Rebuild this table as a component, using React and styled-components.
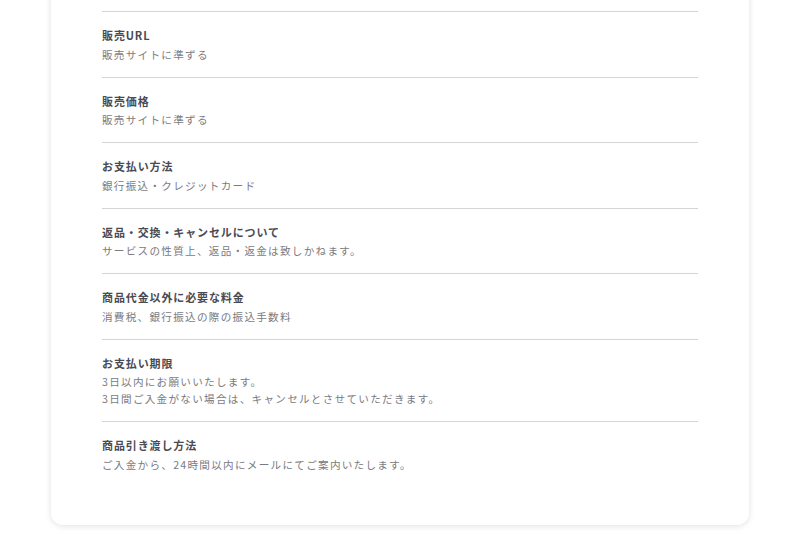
import React from "react";
import styled, { createGlobalStyle } from "styled-components";

const Global = createGlobalStyle`
  html, body { margin: 0; padding: 0; background: #ffffff; }
  body { font-family: "Noto Sans CJK JP", "Noto Sans", sans-serif; }
`;

const Page = styled.div`
  padding: 0 51px 35px;
  overflow: hidden;
`;

const Card = styled.section`
  margin-top: -40px;
  width: 698px;
  box-sizing: border-box;
  background: #fff;
  border-radius: 12px;
  box-shadow: 0 1px 6px rgba(0, 0, 0, 0.12);
  padding: 51px 51px 38px;
`;

const List = styled.dl`
  margin: 0;
`;

const Row = styled.div`
  border-top: 1px solid #d4d4d8;
  padding: 15px 0 13.6px;
  display: flex;
  flex-direction: column;
  gap: 3px;
`;

const Term = styled.dt`
  margin: 0;
  font-size: 11px;
  line-height: 16.5px;
  letter-spacing: 0.08em;
  font-weight: 700;
  color: #4a4a52;
`;

const Desc = styled.dd`
  margin: 0;
  font-size: 10.6px;
  line-height: 16.5px;
  letter-spacing: 0.12em;
  color: #7a7a7f;
`;

const items = [
  ["販売URL", ["販売サイトに準ずる"]],
  ["販売価格", ["販売サイトに準ずる"]],
  ["お支払い方法", ["銀行振込・クレジットカード"]],
  ["返品・交換・キャンセルについて", ["サービスの性質上、返品・返金は致しかねます。"]],
  ["商品代金以外に必要な料金", ["消費税、銀行振込の際の振込手数料"]],
  ["お支払い期限", ["3日以内にお願いいたします。", "3日間ご入金がない場合は、キャンセルとさせていただきます。"]],
  ["商品引き渡し方法", ["ご入金から、24時間以内にメールにてご案内いたします。"]],
];

export default function App() {
  return (
    <Page>
      <Global />
      <Card>
        <List>
          {items.map(([t, lines]) => (
            <Row key={t}>
              <Term>{t}</Term>
              <Desc>
                {lines.map((l, i) => (
                  <React.Fragment key={i}>
                    {i > 0 && <br />}
                    {l}
                  </React.Fragment>
                ))}
              </Desc>
            </Row>
          ))}
        </List>
      </Card>
    </Page>
  );
}
